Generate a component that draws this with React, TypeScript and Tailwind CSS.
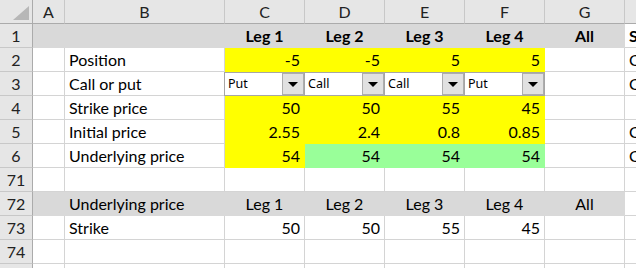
import React from "react";

type Cell = {
  text?: string;
  bold?: boolean;
  align?: "left" | "right" | "center";
  fill?: "yellow" | "green" | "gray";
  select?: string;
};

const COLS = ["A", "B", "C", "D", "E", "F", "G", "H"];
const WIDTHS = ["w-[32px]", "w-[160px]", "w-[80px]", "w-[80px]", "w-[80px]", "w-[80px]", "w-[80px]", "w-[80px]"];

const FILL: Record<string, string> = {
  yellow: "bg-[#ffff00] border-[#ffff00]",
  green: "bg-[#99ff99] border-[#99ff99]",
  gray: "bg-[#d9d9d9] border-[#d9d9d9]",
};

const g = (text = "", bold = false, align: Cell["align"] = "center"): Cell => ({ text, bold, align, fill: "gray" });
const y = (text: string): Cell => ({ text, align: "right", fill: "yellow" });
const gr = (text: string): Cell => ({ text, align: "right", fill: "green" });
const l = (text: string): Cell => ({ text, align: "left" });
const r = (text: string): Cell => ({ text, align: "right" });
const e: Cell = {};

const ROWS: { num: string; cells: Cell[] }[] = [
  { num: "1", cells: [g(), g(), g("Leg 1", true), g("Leg 2", true), g("Leg 3", true), g("Leg 4", true), g("All", true), { text: "S", bold: true, align: "left" }] },
  { num: "2", cells: [e, l("Position"), y("-5"), y("-5"), y("5"), y("5"), e, l("C")] },
  { num: "3", cells: [e, l("Call or put"), { select: "Put" }, { select: "Call" }, { select: "Call" }, { select: "Put" }, e, l("C")] },
  { num: "4", cells: [e, l("Strike price"), y("50"), y("50"), y("55"), y("45"), e, e] },
  { num: "5", cells: [e, l("Initial price"), y("2.55"), y("2.4"), y("0.8"), y("0.85"), e, l("C")] },
  { num: "6", cells: [e, l("Underlying price"), y("54"), gr("54"), gr("54"), gr("54"), e, l("C")] },
  { num: "71", cells: [e, e, e, e, e, e, e, e] },
  { num: "72", cells: [g(), g("Underlying price", false, "left"), g("Leg 1"), g("Leg 2"), g("Leg 3"), g("Leg 4"), g("All"), e] },
  { num: "73", cells: [e, l("Strike"), r("50"), r("50"), r("55"), r("45"), e, e] },
  { num: "74", cells: [e, e, e, e, e, e, e, e] },
  { num: "75", cells: [e, e, e, e, e, e, e, e] },
];

function Dropdown({ value }: { value: string }) {
  return (
    <div className="flex h-full w-full items-center border-y border-r border-[#a6a6a6] bg-white">
      <span className="flex-1 pl-[3px] pt-[1px] font-['Noto_Sans',sans-serif] text-[12.5px] text-black">{value}</span>
      <div className="flex h-[22px] w-[22px] items-center justify-center border border-[#adadad] bg-[#e1e1e1]">
        <svg width="10" height="5" viewBox="0 0 10 5">
          <polygon points="0,0 10,0 5,5" fill="#000" />
        </svg>
      </div>
    </div>
  );
}

export default function App() {
  return (
    <div className="h-[268px] w-[636px] overflow-hidden bg-white font-['Lato',sans-serif] text-[16px] text-black">
      <div className="flex h-[24px]">
        <div className="relative h-full w-[33px] shrink-0 border-r border-b border-[#ababab] bg-[#e6e6e6]">
          <svg className="absolute left-[13px] top-[6px]" width="16" height="14" viewBox="0 0 16 14">
            <polygon points="16,0 16,14 0,14" fill="#b7b7b7" />
          </svg>
        </div>
        {COLS.map((c, i) => (
          <div
            key={c}
            className={`${WIDTHS[i]} flex h-full shrink-0 items-center justify-center border-r border-b border-r-[#c8c8c8] border-b-[#ababab] bg-[#e6e6e6] text-[#222]`}
          >
            {c}
          </div>
        ))}
      </div>
      {ROWS.map((row) => (
        <div key={row.num} className="flex h-[24px]">
          <div className="flex h-full w-[33px] shrink-0 items-center justify-center border-r border-b border-r-[#ababab] border-b-[#c8c8c8] bg-[#e6e6e6] text-[#222]">
            {row.num}
          </div>
          {row.cells.map((cell, i) => {
            const base = `${WIDTHS[i]} flex h-full shrink-0 items-center overflow-hidden whitespace-nowrap border-r border-b pt-[1px]`;
            if (cell.select) {
              return (
                <div key={i} className={`${WIDTHS[i]} h-full shrink-0 ${i === 2 ? "-ml-px w-[81px] border-l border-[#a6a6a6]" : ""}`}>
                  <Dropdown value={cell.select} />
                </div>
              );
            }
            const fill = cell.fill ? FILL[cell.fill] : "border-[#d4d4d4]";
            const align =
              cell.align === "right" ? "justify-end pr-[4px]" : cell.align === "center" ? "justify-center" : "justify-start pl-[4px]";
            return (
              <div key={i} className={`${base} ${fill} ${align} ${cell.bold ? "font-bold" : ""}`}>
                {cell.text}
              </div>
            );
          })}
        </div>
      ))}
    </div>
  );
}
